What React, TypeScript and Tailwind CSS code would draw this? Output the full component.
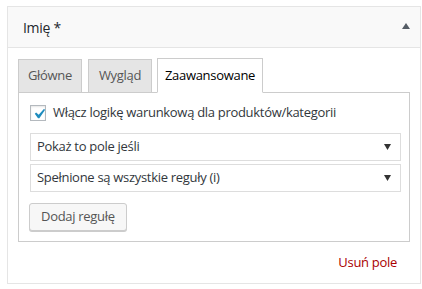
import React from "react";

export default function App() {
  return (
    <div className="w-[422px] h-[289px] bg-white pt-[6px] pl-[7px] font-['Open_Sans',sans-serif] text-[13px] tracking-[-0.3px]">
      <div className="w-[414px] h-[278px] border border-[#e5e5e5] flex flex-col">
        {/* header */}
        <div className="h-[41px] bg-[#f9f9f9] border-b border-[#e5e5e5] flex items-center justify-between pl-[15px] pr-[10px]">
          <span className="text-[14px] text-[#23282d] pt-[1px]">Imię *</span>
          <svg width="8" height="6" viewBox="0 0 8 6" className="mt-[-2px]">
            <polygon points="4,0 8,6 0,6" fill="#555d66" />
          </svg>
        </div>
        {/* body */}
        <div className="flex-1 px-[10px] pt-[10px] flex flex-col">
          <div className="flex items-end h-[34px]">
            <div className="w-[64px] h-[34px] border border-[#ccc] bg-[#e5e5e5] text-[#555] flex items-center justify-center mb-[-1px]">
              Główne
            </div>
            <div className="w-[64px] h-[34px] ml-[6px] border border-[#ccc] bg-[#e5e5e5] text-[#555] flex items-center justify-center mb-[-1px]">
              Wygląd
            </div>
            <div className="w-[106px] h-[35px] ml-[5px] border border-[#ccc] border-b-white bg-white text-[#000] flex items-center justify-center mb-[-1px] relative z-10">
              Zaawansowane
            </div>
          </div>
          <div className="h-[150px] border border-[#ccc] pl-[11px] pr-[8px] pt-[11px]">
            <label className="flex items-center h-[18px] gap-[7px] text-[#32373c]">
              <span className="w-[16px] h-[16px] border border-[#b4b9be] bg-white flex items-center justify-center shadow-[inset_0_1px_2px_rgba(0,0,0,0.1)]">
                <svg width="20" height="20" viewBox="0 0 20 20" className="shrink-0 ml-[1px] mt-[1px]">
                  <path d="M14.83 4.89l1.34.94-5.81 8.38H9.02L5.78 9.67l1.34-1.25 2.57 2.4z" fill="#1e8cbe" />
                </svg>
              </span>
              <span>Włącz logikę warunkową dla produktów/kategorii</span>
            </label>
            <div className="mt-[11px] flex flex-col gap-[3px]">
              <div className="h-[28px] border border-[#ddd] bg-white flex items-center justify-between pl-[6px] pr-[9px] text-[#32373c]">
                <span>Pokaż to pole jeśli</span>
                <svg width="7" height="6" viewBox="0 0 7 6">
                  <polygon points="0,0 7,0 3.5,6" fill="#333" />
                </svg>
              </div>
              <div className="h-[28px] border border-[#ddd] bg-white flex items-center justify-between pl-[6px] pr-[9px] text-[#32373c]">
                <span>Spełnione są wszystkie reguły (i)</span>
                <svg width="7" height="6" viewBox="0 0 7 6">
                  <polygon points="0,0 7,0 3.5,6" fill="#333" />
                </svg>
              </div>
            </div>
            <button className="mt-[11px] ml-[-1px] h-[28px] px-[11px] border border-[#ccc] bg-[#f7f7f7] rounded-[3px] shadow-[0_1px_0_#ccc] text-[#555]">
              Dodaj regułę
            </button>
          </div>
          <div className="flex justify-end pr-[13px] pt-[11px]">
            <span className="text-[#a00]">Usuń pole</span>
          </div>
        </div>
      </div>
    </div>
  );
}
